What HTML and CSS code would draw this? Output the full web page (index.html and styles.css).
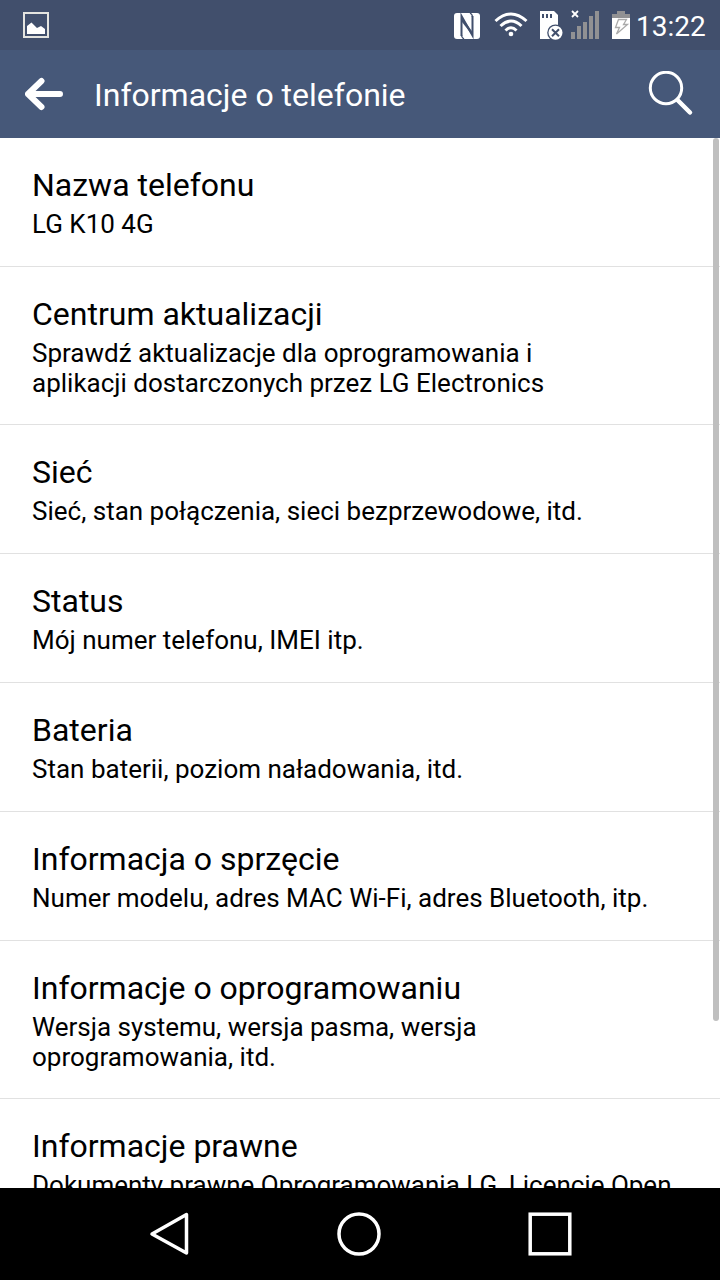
FILE: index.html
```html
<!DOCTYPE html>
<html lang="pl">

<head>
    <meta charset="UTF-8">
    <meta name="viewport" content="width=device-width, initial-scale=1.0">
    <title>Informacje o telefonie</title>
    <link rel="stylesheet" href="styles.css">
</head>

<body>
    <div class="statusbar">
        <svg class="icon-picture" width="26" height="26" viewBox="0 0 26 26">
            <rect x="1" y="1" width="24" height="24" fill="none" stroke="#e4e4e0" stroke-width="2" />
            <path d="M4 22V14L8.500 10.500L14 16L18 14L22 17V22Z" fill="#fff" />
        </svg>
        <div class="statusicons">
            <!-- NFC -->
            <svg class="icon-nfc" width="26" height="26" viewBox="0 0 26 26">
                <rect width="26" height="26" rx="3" fill="#fff" />
                <path d="M7.500 23V3L18.500 22.500V3" fill="none" stroke="#414f6c" stroke-width="2" />
                <path d="M7.500 4L17.500 17.500L18.500 22.500L8 9Z" fill="#414f6c" />
                <path d="M7.500 22Q7.500 24.500 10 26M18.500 4Q18.500 1.500 16 0" fill="none" stroke="#414f6c" stroke-width="1.300" />
            </svg>
            <!-- Wi-Fi -->
            <svg class="icon-wifi" width="34" height="26" viewBox="0 0 34 26">
                <path d="M1.500 9Q17 -5 32.500 9M6.500 14Q17 4 27.500 14M11.500 18.500Q17 13 22.500 18.500" fill="none" stroke="#fff" stroke-width="3" />
                <circle cx="17" cy="22" r="2.300" fill="#fff" />
            </svg>
            <!-- Karta SD -->
            <svg class="icon-sd" width="24" height="30" viewBox="0 0 24 30">
                <path d="M0 0H14L18 4V28H0Z" fill="#fff" />
                <path d="M3 3V7M7 3V7M11 3V7" stroke="#414f6c" stroke-width="2" />
                <circle cx="15.500" cy="21.700" r="8.300" fill="#414f6c" />
                <circle cx="15.500" cy="21.700" r="7" fill="#fff" />
                <path d="M12 18.200L19 25.200M19 18.200L12 25.200" stroke="#414f6c" stroke-width="2" />
            </svg>
            <!-- Sygnał -->
            <svg class="icon-signal" width="29" height="30" viewBox="0 0 29 30">
                <path d="M1 1L7 7M7 1L1 7" stroke="#fff" stroke-width="1.800" />
                <path d="M0 22H4V29H0ZM6 16H10V29H6ZM12 12H16V29H12ZM18 6H22V29H18ZM24 1H28V29H24Z" fill="#919193" />
            </svg>
            <!-- Bateria -->
            <svg class="icon-battery" width="18" height="28" viewBox="0 0 18 28">
                <path d="M5 0H13V3H18V7H0V3H5Z" fill="#919193" />
                <rect y="7" width="18" height="21" fill="#fff" />
                <path d="M6.500 8.500H14.500L11.500 13.500H15.500L4.500 23L7.500 16.500H3.500Z" fill="none" stroke="#aaa" stroke-width="1.300" />
            </svg>
            <span class="clock">13:22</span>
        </div>
    </div>

    <div class="header">
        <svg class="icon-back" width="38" height="34" viewBox="0 0 38 34">
            <path d="M16.500 4L3 17L16.500 30M3 17H35" fill="none" stroke="#fff" stroke-width="6" stroke-linecap="round" stroke-linejoin="round" />
        </svg>
        <h1>Informacje o telefonie</h1>
        <svg class="icon-search" width="46" height="46" viewBox="0 0 46 46">
            <circle cx="18" cy="17" r="15.700" fill="none" stroke="#fff" stroke-width="3" />
            <path d="M29.500 29L42 41.500" stroke="#fff" stroke-width="4.500" stroke-linecap="round" />
        </svg>
    </div>

    <div class="content">
        <div class="item">
            <h2>Nazwa telefonu</h2>
            <p>LG K10 4G</p>
        </div>
        <div class="item twolines">
            <h2>Centrum aktualizacji</h2>
            <p>Sprawdź aktualizacje dla oprogramowania i<br>aplikacji dostarczonych przez LG Electronics</p>
        </div>
        <div class="item">
            <h2>Sieć</h2>
            <p>Sieć, stan połączenia, sieci bezprzewodowe, itd.</p>
        </div>
        <div class="item">
            <h2>Status</h2>
            <p>Mój numer telefonu, IMEI itp.</p>
        </div>
        <div class="item">
            <h2>Bateria</h2>
            <p>Stan baterii, poziom naładowania, itd.</p>
        </div>
        <div class="item">
            <h2>Informacja o sprzęcie</h2>
            <p>Numer modelu, adres MAC Wi-Fi, adres Bluetooth, itp.</p>
        </div>
        <div class="item twolines">
            <h2>Informacje o oprogramowaniu</h2>
            <p>Wersja systemu, wersja pasma, wersja<br>oprogramowania, itd.</p>
        </div>
        <div class="item">
            <h2>Informacje prawne</h2>
            <p>Dokumenty prawne Oprogramowania LG, Licencje Open</p>
        </div>
        <div class="scrollbar"></div>
    </div>

    <div class="navbar">
        <svg width="40" height="44" viewBox="0 0 40 44">
            <path d="M37.500 2.500V41L3 22Z" fill="none" stroke="#fff" stroke-width="3.500" stroke-linejoin="round" />
        </svg>
        <svg width="44" height="44" viewBox="0 0 44 44">
            <circle cx="22" cy="22" r="20" fill="none" stroke="#fff" stroke-width="3.500" />
        </svg>
        <svg width="44" height="44" viewBox="0 0 44 44">
            <rect x="2.200" y="2.200" width="39.600" height="39.600" fill="none" stroke="#fff" stroke-width="3.500" />
        </svg>
    </div>
</body>

</html>
```

FILE: styles.css
```css
body {
    display: flex;
    flex-direction: column;
    font-family: Roboto, sans-serif;
    height: 1280px;
    margin: 0;
    background-color: #fff;
    color: #000;
    overflow: hidden;
}

svg {
    display: block;
    flex-shrink: 0;
}

.statusbar {
    display: flex;
    justify-content: space-between;
    flex-shrink: 0;
    height: 50px;
    padding: 0 14px 0 23px;
    box-sizing: border-box;
    background-color: #414f6c;
}

.icon-picture {
    margin-top: 12px;
}

.statusicons {
    display: flex;
    align-items: flex-start;
}

.icon-nfc {
    margin: 13px 14px 0 0;
}

.icon-wifi {
    margin: 12px 12px 0 0;
}

.icon-sd {
    margin: 11px 7px 0 0;
}

.icon-signal {
    margin: 10px 12px 0 0;
}

.icon-battery {
    margin: 11px 6px 0 0;
}

.clock {
    width: 70px;
    margin-top: 10px;
    color: #fff;
    font-size: 28px;
    line-height: 34px;
}

.header {
    display: flex;
    align-items: center;
    flex-shrink: 0;
    height: 88px;
    padding: 0 25px;
    box-sizing: border-box;
    background-color: #465879;
}

h1 {
    flex: 1;
    margin: 2px 0 0 31px;
    color: #fff;
    font-size: 32px;
    font-weight: 400;
    line-height: 38px;
}

.icon-search {
    margin-right: 1px;
}

.content {
    position: relative;
    flex: 1;
    min-height: 0;
    overflow: hidden;
}

.item {
    padding: 28px 32px 27px;
    border-bottom: 1px solid #e1e1e1;
}

.twolines {
    padding-bottom: 26px;
}

.item h2 {
    margin: 0 0 5px;
    font-size: 32px;
    font-weight: 400;
    line-height: 38px;
}

.item p {
    margin: 0;
    font-size: 26px;
    line-height: 30px;
    white-space: nowrap;
}

.scrollbar {
    position: absolute;
    top: 0;
    right: 1px;
    width: 6px;
    height: 883px;
    border-radius: 3px;
    background-color: #bfbfbf;
}

.navbar {
    display: flex;
    justify-content: space-between;
    align-items: center;
    flex-shrink: 0;
    height: 92px;
    padding: 0 148px 0 149px;
    box-sizing: border-box;
    background-color: #000;
}
```
